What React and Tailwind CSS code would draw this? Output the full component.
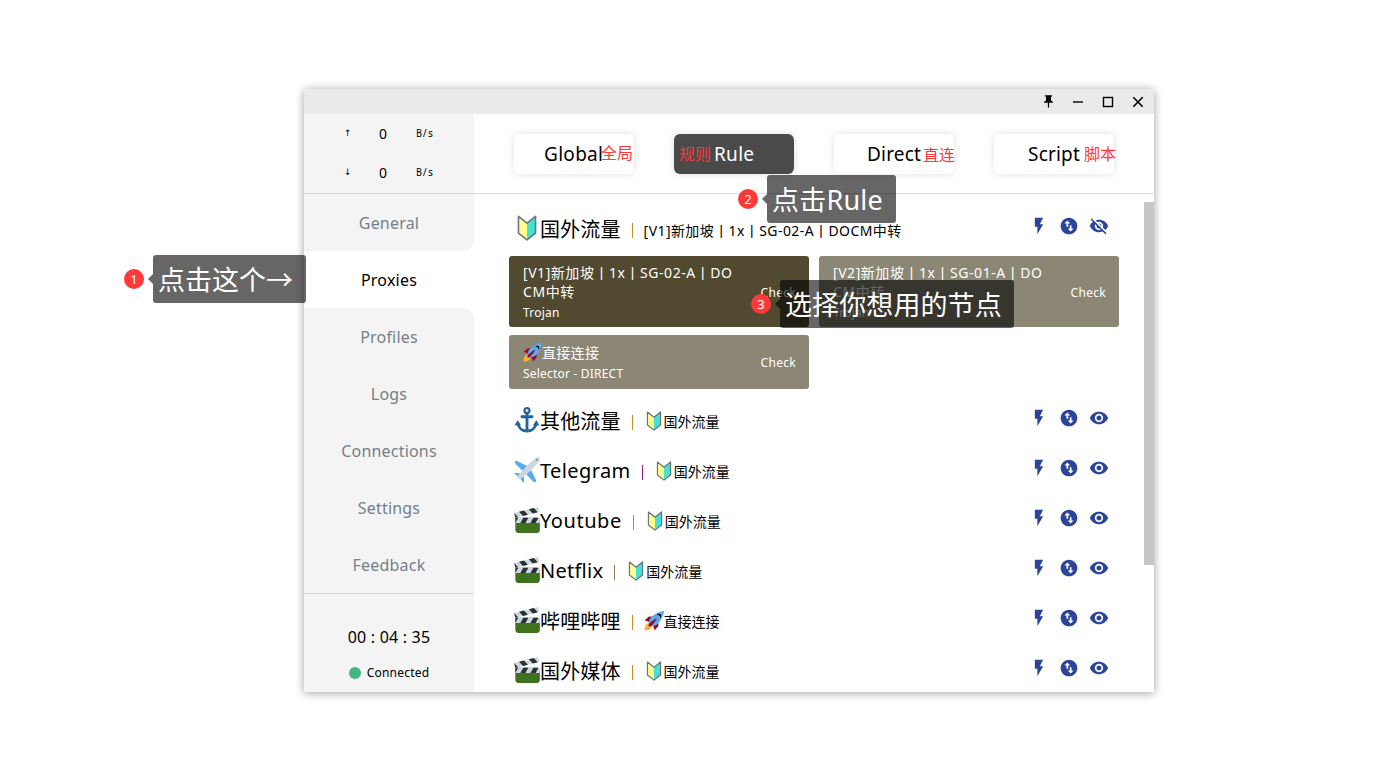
import React from "react";
import {
  MdFlashOn,
  MdSwapVerticalCircle,
  MdVisibility,
  MdVisibilityOff,
  MdPushPin,
} from "react-icons/md";

const Shield = ({ className }) => (
  <svg viewBox="0 0 36 36" className={className}>
    <path fill="#FFFF8D" d="M6.2 1.8 18 11.2v23L6.2 25.2z" />
    <path fill="#48DFD4" d="M29.800 1.8 18 11.2v23l11.800-9z" />
    <path
      fill="none"
      stroke="#66757F"
      strokeWidth="2.2"
      strokeLinejoin="round"
      d="M6.200 1.800 18 11.200 29.800 1.800v23.400L18 34.400 6.200 25.200z"
    />
  </svg>
);

const Anchor = ({ className }) => (
  <svg viewBox="0 0 36 36" className={className} fill="none" stroke="#269" strokeWidth="4">
    <circle cx="18" cy="5" r="3.500" strokeWidth="3" />
    <path d="M18 8.500V33M11 13.500h14" strokeLinecap="round" />
    <path d="M5.500 23c1 6.500 6.500 10.300 12.500 10.300S29.500 29.500 30.500 23" />
    <path d="M5 19.500 2.200 25h6.400zM31 19.500l-3.600 5.500h6.400z" fill="#269" strokeWidth="1.500" strokeLinejoin="round" />
  </svg>
);

const Plane = ({ className }) => (
  <svg viewBox="0 0 36 36" className={className}>
    <path fill="#55ACEE" d="M21 14 3.500 5.200C2.500 4.700 1.200 5.500 1.300 6.700l.6 2.600L13 20zM22 15l8.800 17.500c.5 1-.3 2.300-1.500 2.200l-2.600-.6L16 23z" />
    <path fill="#55ACEE" d="M11.500 22.500 1.800 22c-1 0-1.400 1-.7 1.600L7.500 28.500zM13.500 24.500l.5 9.700c0 1-1 1.400-1.600.7L7.500 28.500z" />
    <path fill="#CCD6DD" d="M35 1c1.200 1.200.8 4.500-2.200 7.500L22.500 19.500 12 28.300c-2.500 2-5.500 2.300-6.300 1.500s-.5-3.800 1.500-6.300L16.500 13.500 27.500 3.200C30.500.2 33.800-.2 35 1z" />
    <path fill="#66757F" d="M30.500 3.200c1-.8 2.800-.2 2.300 2.300-.6.300-2.600-1.600-2.300-2.300z" />
  </svg>
);

const Clapper = ({ className }) => (
  <svg viewBox="0 0 36 36" className={className}>
    <path fill="#3E721D" d="M35.845 32c0 2.200-1.800 4-4 4h-26c-2.200 0-4-1.800-4-4V19c0-2.200 1.800-4 4-4h26c2.200 0 4 1.800 4 4v13z" />
    <path fill="#CCD6DD" d="M1.845 15h34v7h-34z" />
    <path fill="#292F33" d="M1.845 15h4l-4 7v-7zm11 0l-4 7h7l4-7h-7zm14 0l-4 7h7l4-7h-7z" />
    <path fill="#CCD6DD" d="M.155 8.207L33.148 0l1.690 6.792L1.845 15z" />
    <path fill="#292F33" d="M.155 8.207l5.572 5.827L1.845 15 .155 8.207zm19.158 2.448l-5.572-5.828-6.793 1.690 5.572 5.828 6.793-1.690zm13.586-3.380l-5.572-5.828-6.793 1.690 5.572 5.827 6.793-1.689z" />
  </svg>
);

const Rocket = ({ className }) => (
  <svg viewBox="0 0 36 36" className={className}>
    <path fill="#A0041E" d="M1 17l8-7 16 1 1 16-7 8s.001-5.999-6-12-12-6-12-6z" />
    <path fill="#FFAC33" d="M.973 35s-.036-7.979 2.985-11S15 21.187 15 21.187 14.999 29 11.999 32c-3 3-11.026 3-11.026 3z" />
    <circle fill="#FFCC4D" cx="8.999" cy="27" r="4" />
    <path fill="#55ACEE" d="M35.999 0s-10 0-22 10c-6 5-6 14-4 16s11 2 16-4c10-12 10-22 10-22z" />
    <path d="M26.999 5c-1.623 0-3.013.971-3.641 2.360.502-.227 1.055-.360 1.641-.360 2.209 0 4 1.791 4 4 0 .586-.133 1.139-.359 1.640 1.389-.627 2.359-2.017 2.359-3.640 0-2.209-1.791-4-4-4z" />
    <path fill="#A0041E" d="M8 28s0-4 1-5 13.001-10.999 14-10-9.001 13-10.001 14S8 28 8 28z" />
  </svg>
);

const modes = [
  { name: "Global", style: "bg-white text-black pl-[30px] tracking-[0.3px]" },
  { name: "Rule", style: "bg-[#4a4a4a] text-white pl-[40px] tracking-[0.3px]" },
  { name: "Direct", style: "bg-white text-black pl-[33px] tracking-[0.2px]" },
  { name: "Script", style: "bg-white text-black pl-[34px] tracking-[0.2px]" },
];

const nav = [
  { name: "General", style: "bg-[#f4f4f4] text-[#75808a] rounded-br-[10px]" },
  { name: "Proxies", style: "bg-white text-black" },
  { name: "Profiles", style: "bg-[#f4f4f4] text-[#75808a] rounded-tr-[10px]" },
  { name: "Logs", style: "bg-[#f4f4f4] text-[#75808a]" },
  { name: "Connections", style: "bg-[#f4f4f4] text-[#75808a]" },
  { name: "Settings", style: "bg-[#f4f4f4] text-[#75808a]" },
  { name: "Feedback", style: "bg-[#f4f4f4] text-[#75808a]" },
];

const cjk = "mt-[2px] tracking-[0.15px]";

const groups = [
  { icon: Anchor, name: "其他流量", nameStyle: cjk, bar: "bg-[#d08c1c]", sub: Shield, now: "国外流量" },
  { icon: Plane, name: "Telegram", nameStyle: "tracking-[0.4px]", bar: "bg-[#9a1a9a]", sub: Shield, now: "国外流量" },
  { icon: Clapper, name: "Youtube", nameStyle: "tracking-[0.55px]", bar: "bg-[#5aa0d8]", sub: Shield, now: "国外流量" },
  { icon: Clapper, name: "Netflix", nameStyle: "tracking-[0.25px]", bar: "bg-[#8a7650]", sub: Shield, now: "国外流量" },
  { icon: Clapper, name: "哔哩哔哩", nameStyle: cjk, bar: "bg-[#d08c1c]", sub: Rocket, now: "直接连接" },
  { icon: Clapper, name: "国外媒体", nameStyle: cjk, bar: "bg-[#d08c1c]", sub: Shield, now: "国外流量" },
];

function GroupRow({ icon: Icon, name, nameStyle, bar, sub: Sub, now, nowStyle, open }) {
  return (
    <div className="flex h-[50px] items-center pl-[40px] pr-[45px]">
      <Icon className="mb-[2px] size-[26px] shrink-0" />
      <span className={`text-[20px] leading-[30px] ${nameStyle}`}>{name}</span>
      <span className={`ml-[11px] mt-[3px] h-[15px] w-px shrink-0 ${bar}`} />
      <span className="ml-[11px] mt-[2px] flex items-center text-[14px] leading-5">
        {Sub && <Sub className="mb-[2px] size-[20px] shrink-0" />}
        <span className={nowStyle}>{now}</span>
      </span>
      <span className="mb-[6px] ml-auto flex items-center gap-[10px] text-[20px] text-[#2c4599]">
        <MdFlashOn />
        <MdSwapVerticalCircle />
        {open ? <MdVisibilityOff /> : <MdVisibility />}
      </span>
    </div>
  );
}

function Card({ title, type, active }) {
  return (
    <div
      className={`flex w-[300px] items-center justify-between rounded-[3px] pl-[14px] pr-[13px] pt-[2px] text-white ${
        active ? "bg-[#514930]" : "bg-[#8b8774]"
      }`}
    >
      <div className="flex flex-col">
        <div className="text-[14px] leading-[19px]">{title}</div>
        <div className="mt-[2px] text-[12px] leading-[19px] tracking-[0.2px]">{type}</div>
      </div>
      <span className="text-[12px] leading-5 tracking-[0.3px]">Check</span>
    </div>
  );
}

function Speed({ arrow }) {
  return (
    <div className="flex h-[39px] items-center">
      <span className="ml-[40px] w-[35px] font-['DejaVu_Sans',sans-serif] text-[9px]">{arrow}</span>
      <span className="w-[37px] text-[14px]">0</span>
      <span className="font-['Noto_Sans_Mono','DejaVu_Sans_Mono',monospace] text-[10px] tracking-[-0.3px]">B/s</span>
    </div>
  );
}

function Callout({ number, text, place, width }) {
  return (
    <div className={`absolute flex items-center ${place}`}>
      <span className="flex size-5 items-center justify-center rounded-full bg-[#ff3838] text-[13px] leading-none text-white">
        {number}
      </span>
      <span className="ml-[4px] h-0 w-0 border-y-[5px] border-r-[5px] border-y-transparent border-r-black/60" />
      <span
        className={`flex h-[48px] items-center whitespace-nowrap rounded-[3px] bg-black/60 pl-[5px] pt-[3px] text-[27px] text-white ${width}`}
      >
        {text}
      </span>
    </div>
  );
}

export default function App() {
  return (
    <div className="relative h-[781px] w-[1389px] overflow-hidden bg-white pl-[304px] pt-[89px] font-['Noto_Sans','Noto_Sans_CJK_SC',sans-serif] text-black">
      <div className="flex h-[603px] w-[850px] flex-col overflow-hidden rounded-t-[4px] bg-white shadow-[0_1px_10px_rgba(0,0,0,0.38)]">
        <div className="flex h-[25px] shrink-0 items-center justify-end gap-[14px] bg-[#eaeaea] pr-[8px]">
          <MdPushPin className="size-[15px]" />
          <svg viewBox="0 0 16 16" className="size-4">
            <path d="M3 8h10" stroke="#111" strokeWidth="1.600" />
          </svg>
          <svg viewBox="0 0 16 16" className="size-4">
            <rect x="3.500" y="3.500" width="9" height="9" fill="none" stroke="#000" strokeWidth="1.400" />
          </svg>
          <svg viewBox="0 0 16 16" className="size-4">
            <path d="m3.300 3.300 9.400 9.400m0-9.400-9.400 9.400" stroke="#000" strokeWidth="1.600" />
          </svg>
        </div>

        <div className="flex h-[80px] shrink-0 border-b border-[#d9dada]">
          <div className="w-[170px] bg-[#f4f4f4]">
            <Speed arrow="↑" />
            <Speed arrow="↓" />
          </div>
          <div className="flex flex-1 gap-[40px] pl-[40px] pt-[20px]">
            {modes.map((m) => (
              <div
                key={m.name}
                className={`flex h-[40px] w-[120px] items-center rounded-[6px] text-[19px] shadow-[0_0_8px_rgba(0,0,0,0.13)] ${m.style}`}
              >
                {m.name}
              </div>
            ))}
          </div>
        </div>

        <div className="flex min-h-0 flex-1">
          <div className="flex w-[170px] shrink-0 flex-col">
            {nav.map((n) => (
              <div
                key={n.name}
                className={`flex h-[57px] shrink-0 items-center justify-center text-[16px] tracking-[0.2px] ${n.style}`}
              >
                {n.name}
              </div>
            ))}
            <div className="flex flex-1 flex-col items-center border-t border-[#d9dada] bg-[#f4f4f4] pt-[31px]">
              <span className="text-[16px] leading-6 tracking-[0.2px]">00 : 04 : 35</span>
              <span className="mt-[14px] flex items-center gap-[6px] text-[12px] leading-5 tracking-[0.2px]">
                <span className="size-3 rounded-full bg-[#41b883]" />
                Connected
              </span>
            </div>
          </div>

          <div className="flex min-w-0 flex-1 pt-[8px]">
            <div className="w-[670px] shrink-0 overflow-hidden pt-[2px]">
              <div className="-mr-[10px]">
                <GroupRow
                  icon={Shield}
                  name="国外流量"
                  nameStyle={cjk}
                  bar="bg-[#d08c1c]"
                  now="[V1]新加坡丨1x丨SG-02-A丨DOCM中转"
                  nowStyle="mt-[1px] tracking-[0.42px]"
                  open
                />
                <div className="flex flex-wrap gap-x-[10px] gap-y-[8px] pb-[7px] pl-[35px] pt-[2px]">
                  <div className="flex h-[71px]">
                    <Card
                      active
                      type="Trojan"
                      title={<span className="tracking-[0.55px]">[V1]新加坡丨1x丨SG-02-A丨DO<br />CM中转</span>}
                    />
                  </div>
                  <div className="flex h-[71px]">
                    <Card
                      type="Trojan"
                      title={<span className="tracking-[0.55px]">[V2]新加坡丨1x丨SG-01-A丨DO<br />CM中转</span>}
                    />
                  </div>
                  <div className="flex h-[54px]">
                    <Card
                      type="Selector - DIRECT"
                      title={
                        <span className="flex items-center tracking-[0.3px]">
                          <Rocket className="-mt-px size-[19px]" />
                          直接连接
                        </span>
                      }
                    />
                  </div>
                </div>
                {groups.map((g) => (
                  <GroupRow key={g.name} {...g} />
                ))}
              </div>
            </div>
            <div className="h-[363px] w-[10px] bg-[#c8c7c6]" />
          </div>
        </div>
      </div>

      <span className="absolute left-[601px] top-[141px] text-[16px] leading-6 text-[#ff3838]">全局</span>
      <span className="absolute left-[679px] top-[142px] text-[16px] leading-6 text-[#ff3838]">规则</span>
      <span className="absolute left-[923px] top-[143px] text-[16px] leading-6 text-[#ff3838]">直连</span>
      <span className="absolute left-[1084px] top-[142px] text-[16px] leading-6 text-[#ff3838]">脚本</span>

      <Callout number="1" text="点击这个→" place="left-[124px] top-[255px]" width="w-[153px]" />
      <Callout number="2" text="点击Rule" place="left-[738px] top-[175px]" width="w-[129px] tracking-[0.2px]" />
      <Callout number="3" text="选择你想用的节点" place="left-[751px] top-[280px]" width="w-[234px] tracking-[0.1px]" />
    </div>
  );
}
